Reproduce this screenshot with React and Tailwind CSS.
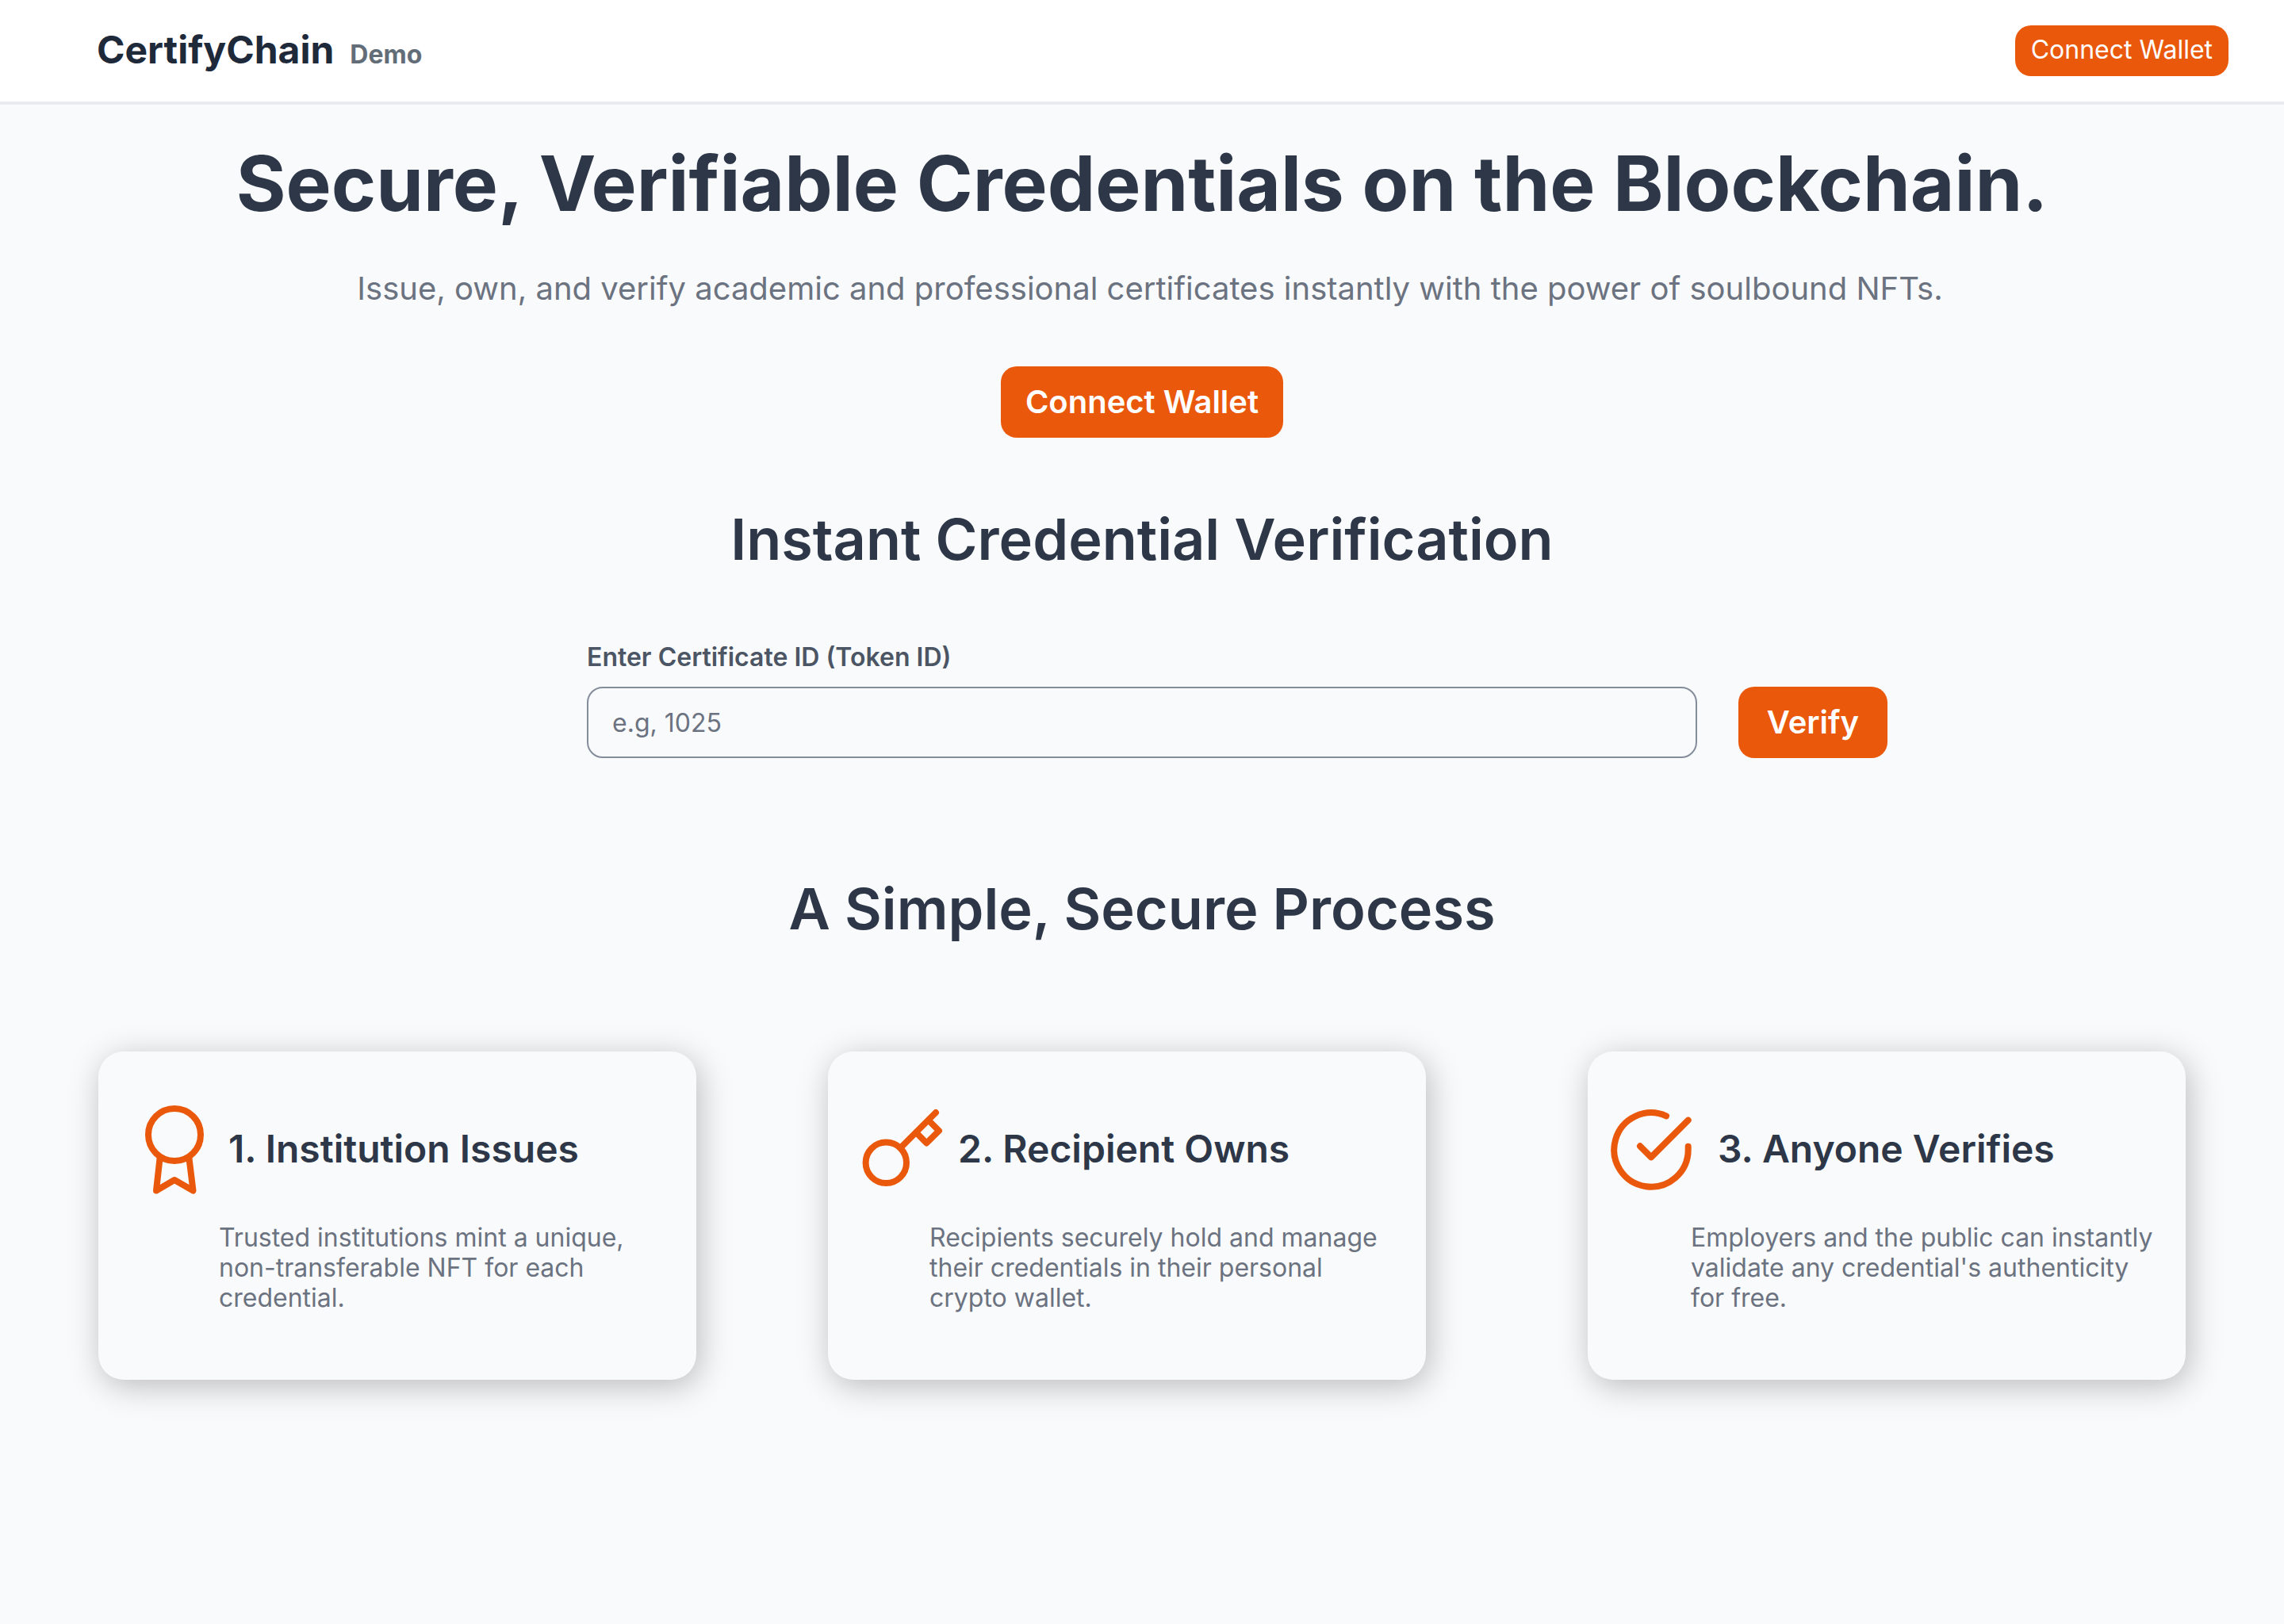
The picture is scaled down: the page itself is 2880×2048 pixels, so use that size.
function AwardIcon() {
  return (
    <svg viewBox="0 0 96 128" className="h-32 w-24" fill="none" stroke="currentColor" strokeWidth="8" strokeLinecap="round" strokeLinejoin="round" aria-hidden="true">
      <circle cx="48" cy="46" r="33" />
      <path d="M29.5 76L25 116.5L48 103L71.5 116.5L66.5 76" />
    </svg>
  );
}

function KeyIcon() {
  return (
    <svg viewBox="0 0 128 128" className="size-32" fill="none" stroke="currentColor" strokeWidth="8" strokeLinecap="round" strokeLinejoin="round" aria-hidden="true">
      <circle cx="37.3" cy="81.3" r="25.7" />
      <path d="M56 62L100 18M75 43L88.3 56.5L104 41L91 28" />
    </svg>
  );
}

function CheckIcon() {
  return (
    <svg viewBox="0 0 128 128" className="size-32" fill="none" stroke="currentColor" strokeWidth="8" strokeLinecap="round" strokeLinejoin="round" aria-hidden="true">
      <path d="M110.7 60.7V65A46.7 46.7 0 1 1 83 22.3" />
      <path d="M110.7 27.7L64 74.3L50 60.3" />
    </svg>
  );
}

const steps = [
  { title: "1. Institution Issues", text: "Trusted institutions mint a unique, non-transferable NFT for each credential.", Icon: AwardIcon, slot: "pl-12", body: "pl-[152px] pr-16", card: "" },
  { title: "2. Recipient Owns", text: "Recipients securely hold and manage their credentials in their personal crypto wallet.", Icon: KeyIcon, slot: "pl-9", body: "pl-32 pr-14", card: "" },
  { title: "3. Anyone Verifies", text: "Employers and the public can instantly validate any credential's authenticity for free.", Icon: CheckIcon, slot: "pl-4", body: "pl-[130px] pr-8", card: "ml-[38px]" },
];

export default function App() {
  return (
    <div className="min-h-screen bg-[#f9fafc] font-['Inter',sans-serif] text-[#2d3748]">
      <header className="flex h-33 items-center justify-between border-b-4 border-[#e9ebf0] bg-white pr-[70px] pb-0.5 pl-[122px]">
        <div className="flex items-baseline gap-5">
          <span className="text-[48px] leading-[58px] font-bold text-[#1e2a3a]">CertifyChain</span>
          <span className="text-[32px] leading-[38px] font-bold text-[#626d78]">Demo</span>
        </div>
        <button type="button" className="mt-0.5 h-16 rounded-[20px] bg-[#ea580c] px-5 pb-0.5 text-[32px] leading-[38px] text-white">Connect Wallet</button>
      </header>

      <main>
        <section className="flex flex-col items-center pt-[41px] text-center">
          <h1 className="text-[96px] leading-[116px] font-bold">Secure, Verifiable Credentials on the Blockchain.</h1>
          <p className="mt-[51px] pl-5 text-[40px] leading-[48px] text-[#6b7280]">
            Issue, own, and verify academic and professional certificates instantly with the power of soulbound NFTs.
          </p>
          <button type="button" className="mt-[74px] h-[90px] rounded-[20px] bg-[#ea580c] px-[31px] text-[40px] leading-[48px] font-semibold text-white">Connect Wallet</button>
        </section>

        <section className="pt-[84px]">
          <h2 className="text-center text-[72px] leading-[87px] font-semibold">Instant Credential Verification</h2>
          <form className="mx-auto mt-[87px] grid w-[1880px] max-w-full grid-cols-[1fr_188px] gap-x-[52px] gap-y-[18px] pl-60" onSubmit={(e) => e.preventDefault()}>
            <label htmlFor="certificate-id" className="col-span-2 text-[32px] leading-[38px] font-semibold text-[#4b5563]">Enter Certificate ID (Token ID)</label>
            <input id="certificate-id" type="text" placeholder="e.g, 1025" className="h-[90px] w-full rounded-[20px] border-2 border-[#858d9b] bg-transparent px-[30px] text-[32px] placeholder:text-[#6b7280]" />
            <button type="submit" className="h-[90px] rounded-[20px] bg-[#ea580c] text-[40px] leading-[48px] font-semibold text-white">Verify</button>
          </form>
        </section>

        <section className="px-[124px] pt-[146px] pb-24">
          <h2 className="text-center text-[72px] leading-[87px] font-semibold">A Simple, Secure Process</h2>
          <div className="mt-[137px] flex gap-[166px]">
            {steps.map(({ title, text, Icon, slot, body, card }) => (
              <article key={title} className={`min-h-[414px] flex-1 rounded-[32px] bg-[#f9fafb] pt-[59px] shadow-[4px_8px_40px_rgba(0,0,0,0.25)] ${card}`}>
                <div className="flex items-center">
                  <div className={`w-[164px] shrink-0 text-[#ea580c] ${slot}`}>
                    <Icon />
                  </div>
                  <h3 className="text-[48px] leading-[58px] font-semibold">{title}</h3>
                </div>
                <p className={`mt-[29px] text-[32px] leading-[38px] text-[#6b7280] ${body}`}>{text}</p>
              </article>
            ))}
          </div>
        </section>
      </main>
    </div>
  );
}
